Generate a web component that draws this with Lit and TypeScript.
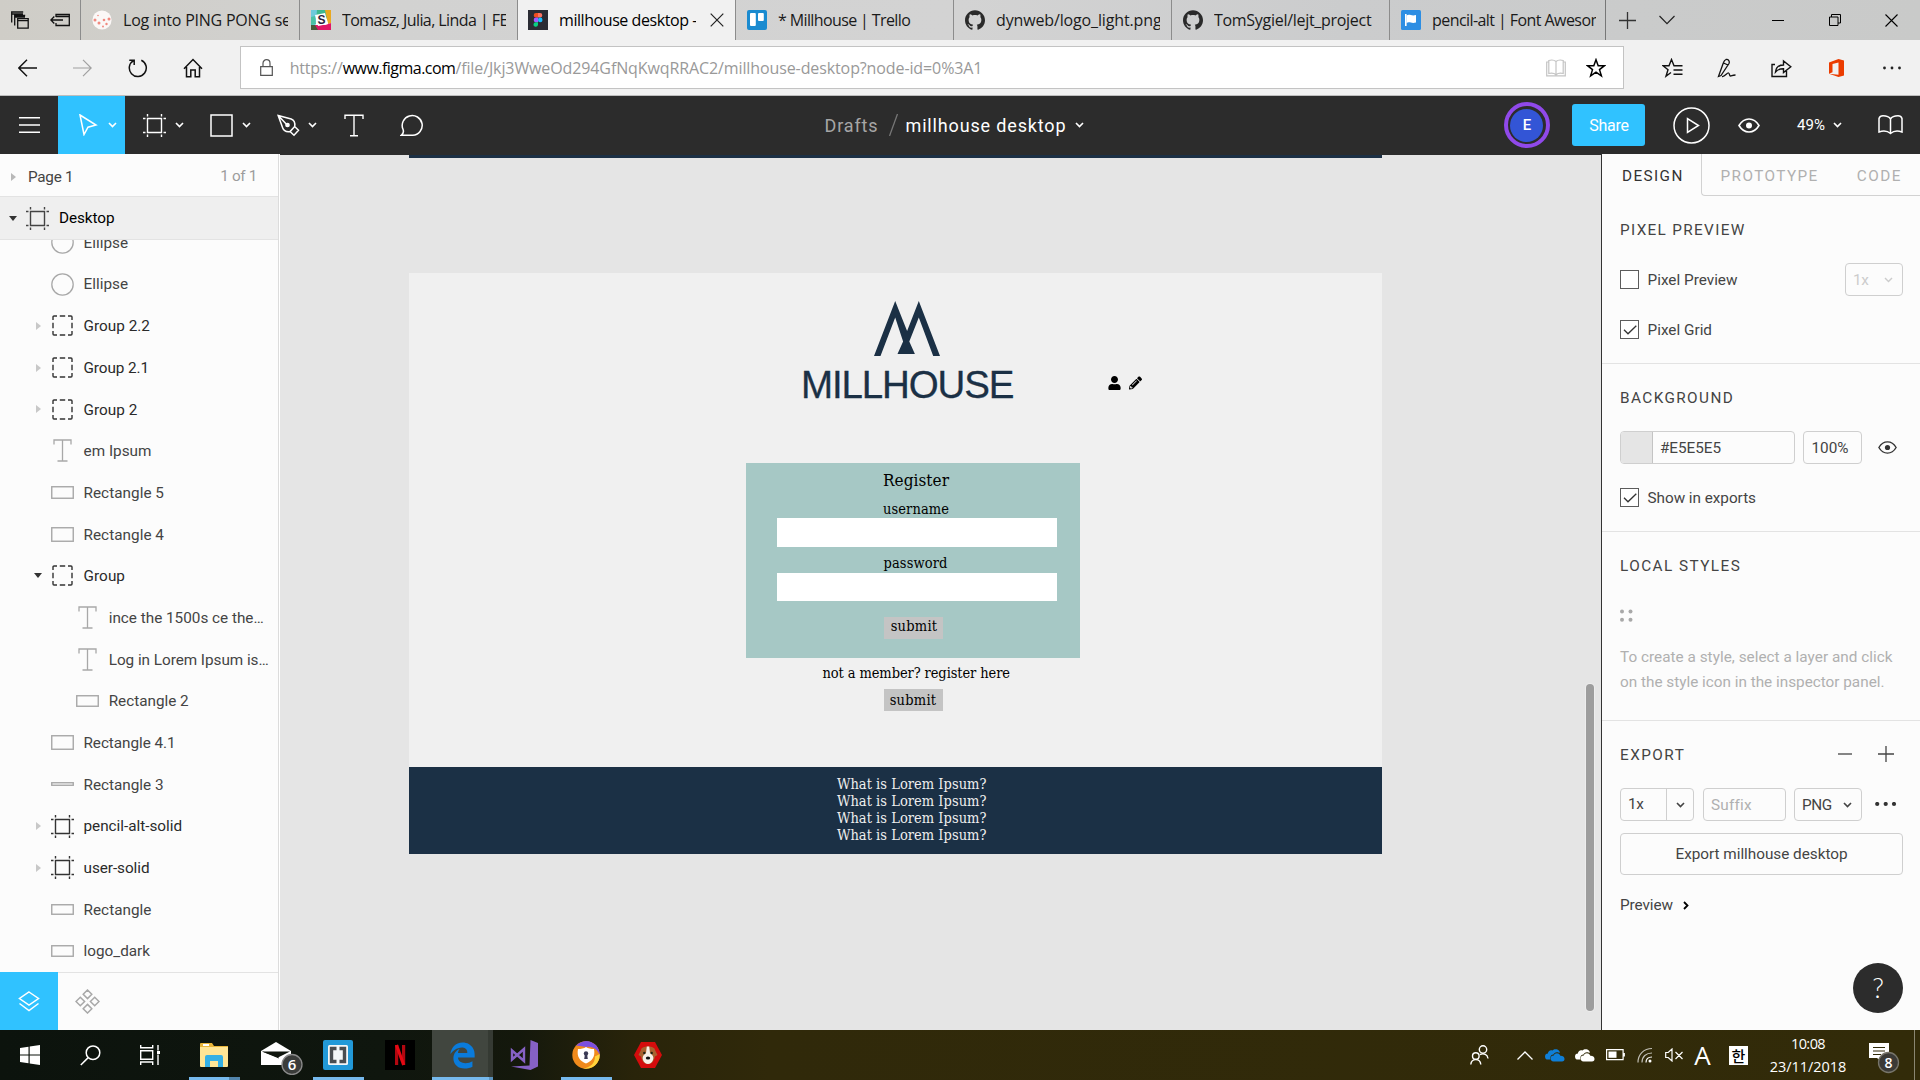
import { LitElement, html, svg, css, TemplateResult } from "lit";
import { customElement, property, query } from "lit/decorators.js";
import { classMap } from "lit/directives/class-map.js";

/** Single-line label whose tracking is adjusted to fill a given width. */
@customElement("fit-text")
class FitText extends LitElement {
  static styles = css`
    :host { display: inline-block; white-space: pre; flex: none; }
    .t { display: inline-block; }
  `;
  @property() text = "";
  @property({ type: Number }) w = 0;
  @query(".t") span!: HTMLElement;
  updated() {
    const s = this.span;
    s.style.letterSpacing = "0px";
    const natural = s.getBoundingClientRect().width;
    s.style.letterSpacing = `${(this.w - natural) / Math.max(1, this.text.length - 0.5)}px`;
  }
  render() {
    return html`<span class="t">${this.text}</span>`;
  }
}

const fit = (text: string, w: number) => html`<fit-text .text=${text} .w=${w}></fit-text>`;

/** Stroke icon on a w×h grid. */
const icon = (w: number, h: number, body: unknown, stroke = "currentColor", sw = 1.4) => html`<svg
  class="ic" width=${w} height=${h} viewBox="0 0 ${w} ${h}" fill="none" stroke=${stroke} stroke-width=${sw}>${body}</svg>`;

const chevron = (sw = 1.6) => icon(9, 6, svg`<path d="M1 1l3.500 3.600L8 1"/>`, "currentColor", sw);
const GH = "M12 .297c-6.63 0-12 5.373-12 12 0 5.303 3.438 9.8 8.205 11.385.6.113.82-.258.82-.577 0-.285-.01-1.04-.015-2.04-3.338.724-4.042-1.61-4.042-1.61C4.422 18.07 3.633 17.7 3.633 17.7c-1.087-.744.084-.729.084-.729 1.205.084 1.838 1.236 1.838 1.236 1.07 1.835 2.809 1.305 3.495.998.108-.776.417-1.305.76-1.605-2.665-.3-5.466-1.332-5.466-5.93 0-1.31.465-2.38 1.235-3.22-.135-.303-.54-1.523.105-3.176 0 0 1.005-.322 3.3 1.23.96-.267 1.98-.399 3-.405 1.02.006 2.04.138 3 .405 2.28-1.552 3.285-1.23 3.285-1.23.645 1.653.24 2.873.12 3.176.765.84 1.23 1.91 1.23 3.22 0 4.61-2.805 5.625-5.475 5.92.42.36.81 1.096.81 2.22 0 1.606-.015 2.896-.015 3.286 0 .315.21.69.825.57C20.565 22.092 24 17.592 24 12.297c0-6.627-5.373-12-12-12";
const USER = "M224 256c70.7 0 128-57.3 128-128S294.7 0 224 0 96 57.3 96 128s57.3 128 128 128zm89.6 32h-16.7c-22.2 10.2-46.9 16-72.9 16s-50.6-5.8-72.9-16h-16.7C60.2 288 0 348.2 0 422.4V464c0 26.5 21.5 48 48 48h352c26.5 0 48-21.5 48-48v-41.6c0-74.2-60.2-134.4-134.4-134.4z";
const PENCIL = "M497.9 142.1l-46.1 46.1c-4.7 4.7-12.3 4.7-17 0l-111-111c-4.7-4.7-4.7-12.3 0-17l46.1-46.1c18.7-18.7 49.1-18.7 67.9 0l60.1 60.1c18.8 18.7 18.8 49.1 0 67.9zM284.2 99.8L21.6 362.4.4 483.9c-2.9 16.4 11.4 30.6 27.8 27.8l121.5-21.3 262.6-262.6c4.7-4.7 4.7-12.3 0-17l-111-111c-4.8-4.7-12.4-4.7-17.1 0zM124.1 339.9c-5.5-5.5-5.5-14.3 0-19.8l154-154c5.5-5.5 14.3-5.5 19.8 0s5.5 14.3 0 19.8l-154 154c-5.5 5.5-14.3 5.5-19.8 0zM88 424h48v36.3l-64.5 11.3-31.1-31.1L51.7 376H88v48z";
const EDGE = "M25.714 228.163c.111-.162.204-.323.315-.485-.035.162-.069.323-.115.485h-.2zm460.572 15.508c0-44.032-7.754-84.465-28.801-122.405C416.498 47.879 343.912 8.001 258.893 8.001 118.962 7.724 40.617 113.214 26.214 227.678c42.429-61.312 117.073-121.376 220.375-124.966 0 0 109.666 0 99.419 104.957H169.997c6.369-37.386 18.554-58.986 34.339-78.926-75.048 34.894-121.85 96.096-120.742 188.315.83 71.448 50.124 144.836 120.743 171.976 83.357 31.847 192.776 7.2 240.132-21.324V363.307c-80.864 56.494-270.871 60.925-272.255-67.572h314.073v-52.064z";

/* ---------- Browser chrome ---------- */

const favicons: Record<string, TemplateResult> = {
  ping: icon(20, 20, svg`<circle cx="10" cy="10" r="9.600" fill="#fbf8f7"/><g fill="#f08a80"><circle cx="3" cy="10" r="1.500"/><circle cx="7" cy="13" r="1.500"/><circle cx="12" cy="10" r="1.300"/><circle cx="17" cy="9" r="1.500"/><circle cx="14.500" cy="14" r="1.200"/><circle cx="11" cy="16.500" r="1"/><circle cx="6" cy="5.500" r=".8"/></g>`, "none"),
  slack: icon(20, 20, svg`<rect width="20" height="20" fill="#fff"/><path d="M0 0h14l-4 6L0 7z" fill="#3eb890"/><path d="M0 0h6L4 20H0z" fill="#6ecadc"/><path d="M0 7l4-1 1 8-5 1z" fill="#4cc3a5"/><path d="M9 0l11 0v8l-6 1L8 4z" fill="#3eb890"/><path d="M14 0h6v13l-3 1z" fill="#e9a820"/><path d="M0 15l14 0 6-2v7H0z" fill="#e01765"/><path d="M0 15l4 0 3 5H0z" fill="#4a5a3a"/><path d="M4 5l10-2 3 11-10 2z" fill="#fff"/><text x="6.500" y="14" font-family="Liberation Sans" font-weight="bold" font-size="12" fill="#2b2440">S</text>`, "none"),
  figma: icon(20, 20, svg`<rect width="20" height="20" fill="#2b2c34"/><path d="M10 3H8a2.300 2.300 0 0 0 0 4.600h2z" fill="#f24e1e"/><path d="M10 3h2a2.300 2.300 0 0 1 0 4.600h-2z" fill="#ff7262"/><path d="M10 7.600H8a2.300 2.300 0 0 0 0 4.600h2z" fill="#a259ff"/><circle cx="12.200" cy="9.900" r="2.300" fill="#1abcfe"/><path d="M10 12.200H8A2.300 2.300 0 1 0 10 15z" fill="#0acf83"/>`, "none"),
  trello: icon(20, 20, svg`<rect width="20" height="20" rx="2" fill="#1a8bd0"/><rect x="3" y="3" width="5.800" height="13" rx="1" fill="#fff"/><rect x="11" y="3" width="5.800" height="8" rx="1" fill="#fff"/>`, "none"),
  github: html`<svg class="ic" width="20" height="20" viewBox="0 0 24 24" fill="#2a2a2a"><path d=${GH} /></svg>`,
  fa: icon(20, 20, svg`<rect width="20" height="20" rx="1.500" fill="#2d8ee3"/><path d="M4.800 4v12" stroke="#fff" stroke-width="1.600"/><path d="M5.500 5.500c3-1.800 5 1 9.500-.5v7.500c-4.500 1.500-6.500-1.300-9.500.5z" fill="#fff"/>`, "none"),
};

const tabs = [
  { fav: "ping", label: "Log into PING PONG se", w: 168 },
  { fav: "slack", label: "Tomasz, Julia, Linda | FE", w: 166 },
  { fav: "figma", label: "millhouse desktop –", w: 141, active: true },
  { fav: "trello", label: "* Millhouse | Trello", w: 132.5 },
  { fav: "github", label: "dynweb/logo_light.png", w: 165.5 },
  { fav: "github", label: "TomSygiel/lejt_project", w: 157.5 },
  { fav: "fa", label: "pencil-alt | Font Awesom", w: 173 },
];

@customElement("browser-chrome")
class BrowserChrome extends LitElement {
  static styles = css`
    :host { display: block; font-family: "Open Sans", "Noto Sans", sans-serif; color: #1a1a1a; }
    .ic { display: block; flex: none; }
    .tabs { display: flex; height: 40px; background: linear-gradient(90deg, #cfcdc7 0, #d2d2d1 20%, #d3d3d3 50%, #cbcccd 70%, #c9cac9 100%); }
    .lead { display: flex; flex: none; align-items: center; gap: 21px; box-sizing: border-box; width: 80px; padding-left: 11px; }
    .tab { display: flex; flex: none; align-items: center; box-sizing: border-box; width: 218px; height: 40px; padding: 0 11px 0 11px; border-left: 1px solid #8c8c8c; }
    .tab:nth-child(2) { width: 219px; }
    .tab:last-of-type { width: 216px; padding-right: 9px; }
    .tab.active { padding-left: 10px; background: #f1f1f1; }
    .label { flex: 1; min-width: 0; margin-left: 11px; overflow: hidden; white-space: nowrap; font-size: 16px; line-height: 40px; }
    .active .label { margin-right: 14px; color: #000; }
    .after { display: flex; flex: 1; align-items: center; border-left: 1px solid #777; padding-left: 13px; color: #222; }
    .after > .ic { margin-right: 23px; }
    .win { display: flex; margin-left: auto; color: #000; }
    .win span { display: grid; place-items: center; width: 57px; }
    .nav { display: flex; align-items: center; height: 55px; background: #f1f1f1; border-bottom: 1px solid #bdbdbd; }
    .slot { display: grid; place-items: center; width: 55.200px; height: 55px; }
    .address { display: flex; align-items: center; box-sizing: border-box; width: 1384px; height: 43px; margin-left: 19px; padding: 0 17px 0 19px; background: #fff; border: 1px solid #c3c3c3; }
    .url { display: flex; flex: 1; margin-left: 17px; font-size: 16px; color: #999; }
    .host { color: #000; }
    .address .star { margin-left: 20px; }
    .actions { display: flex; margin-left: 21px; }
    .actions .slot { width: 54.900px; }
  `;
  render() {
    return html`
      <div class="tabs">
        <span class="lead">
          ${icon(18, 18, svg`<path d="M.7 11.500V1h11.500M1 3h11M3.700 14.500V4.500h10.500M4 6h10"/><path d="M6.700 7.700h10.500v9.500H6.700zM6.700 9.700h10.500"/>`, "#111", 1.3)}
          ${icon(20, 18, svg`<path d="M6 6V3.500h13.300v11H6V12M6 5.500h13M.8 9H13M4.300 5.500L.8 9l3.500 3.500"/>`, "#111", 1.3)}
        </span>
        ${tabs.map((t) => html`<div class=${classMap({ tab: true, active: !!t.active })}>
          ${favicons[t.fav]}<span class="label">${fit(t.label, t.w)}</span>
          ${t.active ? icon(14, 14, svg`<path d="M.7.7l12.600 12.600M13.300.7L.7 13.300"/>`, "#222", 1.2) : ""}
        </div>`)}
        <section class="after">
          ${icon(17, 17, svg`<path d="M8.500 0v17M0 8.500h17"/>`, "#333", 1.3)}
          ${icon(16, 10, svg`<path d="M.5 1L8 8.600 15.500 1"/>`, "#222", 1.2)}
          <span class="win">
            <span>${icon(12, 12, svg`<path d="M0 6.500h12"/>`, "#000", 1)}</span>
            <span>${icon(12, 12, svg`<path d="M.5 3h8.500v8.500H.5zM2.500 3V.5h9V9H9"/>`, "#000", 1)}</span>
            <span>${icon(13, 13, svg`<path d="M.5.5l12 12M12.500.5l-12 12"/>`, "#000", 1.1)}</span>
          </span>
        </section>
      </div>
      <div class="nav">
        <div class="slot">${icon(19, 18, svg`<path d="M.8 9H19M9 .8L.8 9 9 17.200"/>`, "#111", 1.4)}</div>
        <div class="slot">${icon(19, 18, svg`<path d="M0 9h18.200M10 .8L18.200 9 10 17.200"/>`, "#a0a0a0", 1.2)}</div>
        <div class="slot">${icon(20, 20, svg`<path d="M13.300 2.200a8.500 8.500 0 1 1-7.800.4M1.300 2.200h4.900v4.900"/>`, "#111", 1.5)}</div>
        <div class="slot">${icon(20, 20, svg`<path d="M1 10.800L10 1.500l9 9.300M3.500 9v9.700h4.300V12h4.400v6.700h4.300V9"/>`, "#111", 1.5)}</div>
        <div class="address">
          ${icon(13, 17, svg`<path d="M.7 7.700h11.600v8.600H.7zM3 7.700V4.200a3.500 3.500 0 0 1 7 0v3.500"/>`, "#555", 1.2)}
          <span class="url">${fit("https://", 53)}<span class="host">${fit("www.figma.com", 113)}</span>${fit("/file/Jkj3WweOd294GfNqKwqRRAC2/millhouse-desktop?node-id=0%3A1", 527)}</span>
          ${icon(20, 18, svg`<path d="M10 2.500C8 .8 5 .8 2.800 1.500v13C5 14 8 14 10 15.800c2-1.800 5-1.800 7.200-1.300v-13C15 .8 12 .8 10 2.500zm0 0v13M2.800 3H.7v13.800h18.600V3h-2.100"/>`, "#c4c4c4", 1.2)}
          <span class="star">${icon(20, 20, svg`<path d="M10 1.700l2.200 6h6.300l-5 3.900 1.900 6.300L10 14.200l-5.400 3.700 1.900-6.300-5-3.900h6.300z"/>`, "#000", 1.5)}</span>
        </div>
        <div class="actions">
          <div class="slot">${icon(21, 20, svg`<path d="M13 7.700h-1L9.500 1.500 7 7.700H1l5 4-2 6.500 5-3.700M13 7.700h7.500M11.500 12h9M11.500 16.200h9"/>`, "#111", 1.4)}</div>
          <div class="slot">${icon(20, 20, svg`<path d="M2 17L1.500 18.500 4 17.500 12 5.500c1-2-.5-4.500-3-4C7.500 2 7 3 6.500 4.500L2 17zM5 18.500c3 .5 5-4 6.500-3.500s.5 3 2 3 1.500-1 5-1M6.500 5l4.500 2"/>`, "#111", 1.3)}</div>
          <div class="slot">${icon(21, 20, svg`<path d="M4 6.500H1v12h14.500V13M4.500 14c.5-4.500 3-7 8-7V3l7.300 5.800-7.300 5.700v-3.800c-4 0-6 .8-8 3.300z"/>`, "#111", 1.4)}</div>
          <div class="slot">${icon(17, 20, svg`<path d="M1 4.500L10.500 1 16 2.600v14.800L10.500 19 1 15.700l9.500 1V4.600L4.500 6v8.300L1 15.700z" fill="#eb3c00"/>`, "none")}</div>
          <div class="slot">${icon(20, 4, svg`<g fill="#222"><circle cx="2.500" cy="2" r="1.400"/><circle cx="10" cy="2" r="1.400"/><circle cx="17.500" cy="2" r="1.400"/></g>`, "none")}</div>
        </div>
      </div>`;
  }
}

/* ---------- Editor toolbar ---------- */

const frameIcon = (c: string) => icon(23, 23, svg`<path d="M4.500 4.500h14v14h-14z"/><path d="M4.500 0v2.500M18.500 0v2.500M4.500 20.500V23M18.500 20.500V23M0 4.500h2.500M0 18.500h2.500M20.500 4.500H23M20.500 18.500H23"/>`, c, 1.4);
const eye = (w: number, h: number, c: string) => html`<svg class="ic" width=${w} height=${h} viewBox="0 0 22 15" fill="none" stroke=${c} stroke-width="1.600"><path d="M1 7.500C3.500 3.300 6.800 1 11 1s7.500 2.300 10 6.500c-2.500 4.200-5.800 6.500-10 6.500S3.500 11.700 1 7.500z"/><circle cx="11" cy="7.500" r="3" fill=${c} stroke="none"/></svg>`;

@customElement("editor-toolbar")
class EditorToolbar extends LitElement {
  static styles = css`
    :host { display: flex; height: 58px; background: #2c2c2c; color: #fff; font-family: Roboto, sans-serif; font-size: 16px; }
    .ic { display: block; flex: none; }
    .side { display: flex; flex: 1 1 0; }
    .tool { display: flex; align-items: center; box-sizing: border-box; width: 66.800px; padding-left: 18px; gap: 8px; }
    .tool .pic { display: grid; place-items: center; width: 24px; }
    .tool.on { background: #30c2ff; }
    .tool.wide { width: 58px; padding-left: 17px; }
    .title { display: flex; align-items: center; font-size: 18px; margin-left: -6px; margin-right: 5px; }
    .drafts { color: #a6a6a6; margin-right: 10px; }
    .name { margin: 0 9px 0 8px; }
    .right { justify-content: flex-end; align-items: center; }
    .avatar { display: grid; place-items: center; box-sizing: border-box; width: 46px; height: 46px; border: 4px solid #9049ea; border-radius: 50%; margin-right: 22.500px; }
    .avatar b { display: grid; place-items: center; width: 33px; height: 33px; border-radius: 50%; background: #3355d6; font-size: 15px; font-weight: 500; }
    .share { display: grid; place-items: center; width: 73px; height: 42px; border-radius: 3px; background: #30c2ff; margin-right: 27.500px; }
    .play { margin-right: 28px; }
    .eye { margin-right: 37px; }
    .zoom { display: flex; align-items: center; gap: 8px; margin-right: 36px; font-size: 15px; }
    .book { margin-right: 17px; }
  `;
  tool(pic: TemplateResult, cls = "", menu = true) {
    return html`<div class="tool ${cls}"><span class="pic">${pic}</span>${menu ? chevron() : ""}</div>`;
  }
  render() {
    return html`
      <div class="side">
        ${this.tool(icon(21, 16, svg`<path d="M0 .8h21M0 8h21M0 15.200h21"/>`, "#fff", 1.4), "wide", false)}
        ${this.tool(icon(20, 22, svg`<path d="M2 1l16 10-8 2.200L6 20.500z"/>`, "#fff", 1.5), "on")}
        ${this.tool(frameIcon("#fff"))}
        ${this.tool(icon(23, 23, svg`<path d="M1 1h21v21H1z"/>`, "#fff", 1.5))}
        ${this.tool(icon(23, 23, svg`<path d="M1.200 1.500l13 3.500c3 1 4 4 3.500 7.500l-4.500 5c-3.500.5-6.500-.5-7.500-3.500zM1.200 1.500l8 8.500M13 17.500l4.700-5 3.800 3.800-4.500 5z"/><circle cx="10.500" cy="11" r="1.600" fill="#fff"/>`, "#fff", 1.5))}
        ${this.tool(icon(21, 23, svg`<path d="M1 5V1.200h18V5M10 1.200v20.500M6 21.800h8"/>`, "#fff", 1.4), "wide", false)}
        ${this.tool(icon(25, 24, svg`<path d="M1.200 22.300c2-1.500 2.800-3.500 1.800-6a10 9.900 0 1 1 9.800 6z"/>`, "#fff", 1.5), "wide", false)}
      </div>
      <div class="title">
        <span class="drafts">${fit("Drafts", 53.5)}</span>
        ${icon(9, 22, svg`<path d="M8.500 0L.5 22"/>`, "#777", 1.3)}
        <span class="name">${fit("millhouse desktop", 160.5)}</span>${chevron()}
      </div>
      <div class="side right">
        <span class="avatar"><b>E</b></span>
        <span class="share">${fit("Share", 39.5)}</span>
        <span class="play">${icon(37, 37, svg`<circle cx="18.500" cy="18.500" r="17.500"/><path d="M14.500 11.500v14l11-7z"/>`, "#fff", 1.5)}</span>
        <span class="eye">${eye(22, 15, "#fff")}</span>
        <span class="zoom">${fit("49%", 28)}${chevron()}</span>
        <span class="book">${icon(25, 20, svg`<path d="M12.500 4C11 1.500 8 .8 5 .8 3 .8 1.500 2 1 3.500V17c3-1 8-1.500 11.500 1.500C16 15.500 21 16 24 17V3.500C23.500 2 22 .8 20 .8c-3 0-6 .7-7.500 3.200zm0 0v14.500"/>`, "#fff", 1.5)}</span>
      </div>`;
  }
}

/* ---------- Layers panel ---------- */

type Layer = { kind: "ellipse" | "group" | "text" | "rect" | "frame"; name: string; w: number; h?: number; caret?: "r" | "d"; nested?: boolean };
const layers: Layer[] = [
  { kind: "ellipse", name: "Ellipse", w: 44.5 },
  { kind: "ellipse", name: "Ellipse", w: 44.5 },
  { kind: "group", name: "Group 2.2", w: 66.5, caret: "r" },
  { kind: "group", name: "Group 2.1", w: 65.5, caret: "r" },
  { kind: "group", name: "Group 2", w: 54, caret: "r" },
  { kind: "text", name: "em Ipsum", w: 68 },
  { kind: "rect", name: "Rectangle 5", w: 80.5, h: 12 },
  { kind: "rect", name: "Rectangle 4", w: 80.5, h: 14 },
  { kind: "group", name: "Group", w: 41.5, caret: "d" },
  { kind: "text", name: "ince the 1500s ce the…", w: 155, nested: true },
  { kind: "text", name: "Log in Lorem Ipsum is…", w: 160, nested: true },
  { kind: "rect", name: "Rectangle 2", w: 80, h: 11, nested: true },
  { kind: "rect", name: "Rectangle 4.1", w: 92, h: 14 },
  { kind: "rect", name: "Rectangle 3", w: 80, h: 3 },
  { kind: "frame", name: "pencil-alt-solid", w: 98.5, caret: "r" },
  { kind: "frame", name: "user-solid", w: 66, caret: "r" },
  { kind: "rect", name: "Rectangle", w: 68, h: 10 },
  { kind: "rect", name: "logo_dark", w: 66.5, h: 11 },
];

const caret = (dir?: "r" | "d", dark = false) =>
  dir === "d" ? icon(8, 5, svg`<path d="M0 0h8L4 5z" fill="#333"/>`, "none")
    : dir === "r" ? icon(5, 8, svg`<path d="M0 0l5 4-5 4z" fill=${dark ? "#b8b8b8" : "#c8c8c8"}/>`, "none") : "";

@customElement("layers-panel")
class LayersPanel extends LitElement {
  static styles = css`
    :host { display: flex; flex-direction: column; box-sizing: border-box; width: 279px; background: #fcfcfc; border-right: 1px solid #dcdcdc; font-family: Roboto, sans-serif; font-size: 15.300px; color: #444; }
    .ic { display: block; flex: none; }
    .page, .root { display: flex; align-items: center; box-sizing: border-box; border-bottom: 1px solid #e3e3e3; }
    .page { height: 43px; padding: 3px 21px 0 11px; gap: 12px; }
    .page .count { margin-left: auto; color: #9c9c9c; padding-bottom: 2px; }
    .root { height: 43px; padding-left: 9px; gap: 9px; background: #efefef; color: #000; }
    .root .nm { margin-left: 1px; }
    .list { display: flex; flex-direction: column; justify-content: flex-end; height: 732px; overflow: hidden; }
    .row { display: flex; align-items: center; flex: none; height: 41.700px; padding-left: 32.500px; }
    .row.nested { padding-left: 57.700px; }
    .row.strong { color: #2a2a2a; }
    .row fit-text { padding-top: .6px; }
    .caret { display: grid; place-items: center; width: 11px; }
    .pic { display: grid; place-items: center; width: 23px; margin: 0 9.500px 0 7.500px; }
    .modes { display: flex; box-sizing: border-box; height: 58px; border-top: 1px solid #e3e3e3; }
    .modes span { display: grid; place-items: center; width: 58px; height: 58px; margin-top: -1px; }
    .modes .on { background: #30c2ff; }
  `;
  pic(l: Layer) {
    const g = "#a8a8a8";
    if (l.kind === "ellipse") return icon(23, 23, svg`<circle cx="11.500" cy="11.500" r="10.700"/>`, g, 1.3);
    if (l.kind === "group") return icon(21, 21, svg`<path d="M1 5V2a1 1 0 0 1 1-1h3M16 1h3a1 1 0 0 1 1 1v3M20 16v3a1 1 0 0 1-1 1h-3M5 20H2a1 1 0 0 1-1-1v-3M7.800 1h5.400M7.800 20h5.400M1 7.800v5.400M20 7.800v5.400"/>`, "#333", 1.4);
    if (l.kind === "text") return icon(19, 23, svg`<path d="M1 5.500V1h17v4.500M9.500 1v21M4.500 22h10"/>`, g, 1.3);
    if (l.kind === "frame") return frameIcon("#333");
    const h = l.h!;
    return icon(23, h + 1, svg`<rect x=".75" y=".75" width="21.500" height=${h - 0.5}/>`, g, 1.4);
  }
  render() {
    return html`
      <div class="page">${caret("r", true)}${fit("Page 1", 45.5)}<span class="count">${fit("1 of 1", 37)}</span></div>
      <div class="root">${caret("d")}${frameIcon("#444")}<span class="nm">${fit("Desktop", 55.5)}</span></div>
      <div class="list">
        ${layers.map((l) => html`<div class=${classMap({ row: true, nested: !!l.nested, strong: l.kind === "frame" || l.kind === "group" })}>
          <span class="caret">${caret(l.caret)}</span><span class="pic">${this.pic(l)}</span>${fit(l.name, l.w)}
        </div>`)}
      </div>
      <div class="modes">
        <span class="on">${icon(22, 21, svg`<path d="M11 1l9.500 6.500L11 14 1.500 7.500zM1.500 12.500L11 19.500l9.500-7"/>`, "#fff", 1.5)}</span>
        <span>${icon(25, 25, svg`<path d="M12.500 1l4.300 4.300-4.300 4.300-4.300-4.300zM12.500 15.400l4.300 4.300-4.300 4.300-4.300-4.300zM5.300 8.200l4.300 4.300-4.300 4.300L1 12.500zM19.700 8.200l4.300 4.300-4.300 4.300-4.300-4.300z"/>`, "#a8a8a8", 1.5)}</span>
      </div>`;
  }
}

/* ---------- Canvas ---------- */

@customElement("design-canvas")
class DesignCanvas extends LitElement {
  static styles = css`
    :host { display: block; position: relative; flex: 1; overflow: hidden; background: #e5e5e5; border-top: 1px solid #2c2c2c; color: #000; font-family: "DejaVu Serif Condensed", "DejaVu Serif", serif; font-stretch: condensed; font-size: 14.500px; }
    .ic { display: block; }
    .above { position: absolute; left: 129px; top: 0; width: 973px; height: 3px; background: #1c3045; }
    .board { position: absolute; left: 129px; top: 118px; width: 973px; height: 581px; background: #f0f0f0; }
    .logo { position: absolute; left: 390px; top: 24px; }
    .tools { position: absolute; left: 699px; top: 103px; display: flex; gap: 8px; }
    .card { position: absolute; left: 337px; top: 190px; box-sizing: border-box; width: 334px; height: 195px; background: #a6c8c5; display: flex; flex-direction: column; padding-left: 31px; }
    .h { font-size: 17px; line-height: 20px; height: 20px; margin: 7px 0 0 106px; }
    .lab { line-height: 18px; height: 18px; margin: 10px 0 0 106px; }
    .lab.two { margin: 7px 0 1px 106.500px; }
    .in { width: 280px; height: 28.500px; background: #fff; flex: none; }
    .btn { display: grid; place-items: center; box-sizing: border-box; width: 59px; height: 22px; background: #c4c4c4; line-height: 18px; }
    .card .btn { margin: 15.500px 0 0 106.500px; padding: 0 0 3px 2px; }
    .ask { position: absolute; left: 413.500px; top: 391px; height: 18px; display: flex; line-height: 18px; }
    .board > .btn { position: absolute; left: 474.500px; top: 416px; }
    .foot { position: absolute; left: 0; bottom: 0; box-sizing: border-box; width: 973px; height: 87px; padding: 8.500px 0 0 428px; background: #1b3045; color: #efefef; display: flex; flex-direction: column; line-height: 17px; }
    .bar { position: absolute; left: 1306px; top: 529px; width: 8px; height: 327px; border-radius: 4px; background: #9d9d9d; box-shadow: 0 0 0 1px #ededed; }
  `;
  render() {
    return html`
      <div class="above"></div>
      <div class="board">
        <svg class="logo" width="220" height="108" viewBox="0 0 220 108" fill="#1b3045">
          <path d="M75 59L96.200 4l11.900 30L119.800 4l21.200 55h-6.800L119.800 20.500l-9.500 24 5.600 12.500H98.500l5.600-12.500L96.200 20.500 81.500 59z"/>
          <text x="2" y="100.500" font-family="Liberation Sans, Arial, sans-serif" font-size="38.500" textLength="213.500" stroke="#1b3045" stroke-width=".3">MILLHOUSE</text>
        </svg>
        <div class="tools">
          <svg class="ic" width="13" height="14" viewBox="0 0 448 512"><path d=${USER} /></svg>
          <svg class="ic" width="13" height="14" viewBox="0 0 512 512"><path d=${PENCIL} /></svg>
        </div>
        <div class="card">
          <div class="h">${fit("Register", 66)}</div>
          <div class="lab">${fit("username", 66)}</div>
          <div class="in"></div>
          <div class="lab two">${fit("password", 64)}</div>
          <div class="in"></div>
          <div class="btn">${fit("submit", 46.5)}</div>
        </div>
        <div class="ask">${fit("not a member? register here", 187.5)}</div>
        <div class="btn">${fit("submit", 46.5)}</div>
        <div class="foot">${[0, 1, 2, 3].map(() => fit("What is Lorem Ipsum?", 149.5))}</div>
      </div>
      <div class="bar"></div>`;
  }
}

/* ---------- Inspector ---------- */

@customElement("inspector-panel")
class InspectorPanel extends LitElement {
  static styles = css`
    :host { display: block; position: relative; box-sizing: border-box; width: 319px; background: #fcfcfc; border-left: 1px solid #333; font-family: Roboto, sans-serif; font-size: 15.300px; color: #444; }
    .ic { display: block; flex: none; }
    .tabs { display: flex; height: 42px; line-height: 44px; }
    .design { width: 79px; padding-left: 20px; color: #333; }
    .rest { flex: 1; display: flex; gap: 38px; box-sizing: border-box; height: 42px; padding-left: 18.500px; border: solid #d2d2d2; border-width: 0 0 1px 1px; border-bottom-left-radius: 4px; color: #b0b0b0; }
    section { padding: 0 17px 0 18px; border-bottom: 1px solid #e3e3e3; }
    section.last { border: 0; }
    .head { display: flex; align-items: center; height: 67px; }
    .row { display: flex; align-items: center; height: 33px; }
    .tall { height: 67px; }
    .chk { box-sizing: border-box; width: 19px; height: 19px; margin-right: 8.500px; border: 1.500px solid #5c5c5c; background: #fff; display: grid; place-items: center; }
    .box { display: flex; align-items: center; box-sizing: border-box; height: 33px; border: 1px solid #cfcfcf; border-radius: 4px; }
    .scale { width: 58px; margin-left: auto; padding: 0 9px 0 7px; justify-content: space-between; color: #ccc; }
    .color { width: 175px; margin-right: 8px; overflow: hidden; }
    .swatch { width: 31px; height: 31px; background: #e5e5e5; border-right: 1px solid #c4c4c4; margin-right: 7px; }
    .pct { width: 59px; padding-left: 7.500px; margin-right: 15.500px; }
    .hint { padding: 12.500px 0 25.500px; line-height: 25px; color: #b0b0b0; }
    .hint fit-text { display: block; }
    .minus { margin: -2px 26px 0 auto; }
    .plus { margin: -2px 9.500px 0 0; }
    .mult { width: 74px; margin-right: 9px; }
    .mult .v { width: 38px; padding-left: 7px; line-height: 31px; border-right: 1px solid #cfcfcf; }
    .mult .c { flex: 1; display: grid; place-items: center; }
    .suffix { width: 83px; padding-left: 7px; margin-right: 8px; color: #b0b0b0; }
    .png { width: 68px; padding: 0 9px 0 7px; justify-content: space-between; margin-right: 13px; }
    .export { height: 42px; margin-top: 12px; justify-content: center; }
    .preview { display: flex; align-items: center; gap: 10px; height: 34px; margin-top: 13px; }
    .help { position: absolute; right: 17px; bottom: 17px; width: 50px; height: 50px; border-radius: 50%; background: #2c2c2c; color: #fff; display: grid; place-items: center; font: 300 27px/50px Lato, sans-serif; }
  `;
  check(label: string, w: number, on: boolean) {
    return html`<span class="chk">${on ? icon(14, 10, svg`<path d="M1 4.800l4 4L13.300.7"/>`, "#333", 1.3) : ""}</span>${fit(label, w)}`;
  }
  render() {
    return html`
      <div class="tabs"><div class="design">${fit("DESIGN", 61)}</div><div class="rest">${fit("PROTOTYPE", 97.5)}${fit("CODE", 44.5)}</div></div>
      <section>
        <div class="head">${fit("PIXEL PREVIEW", 125)}</div>
        <div class="row">${this.check("Pixel Preview", 90, false)}<span class="box scale">${fit("1x", 15.5)}${chevron(1.4)}</span></div>
        <div class="row tall">${this.check("Pixel Grid", 64.5, true)}</div>
      </section>
      <section>
        <div class="head">${fit("BACKGROUND", 113.5)}</div>
        <div class="row"><span class="box color"><span class="swatch"></span>${fit("#E5E5E5", 61)}</span><span class="box pct">${fit("100%", 37)}</span>${eye(19, 13, "#333")}</div>
        <div class="row tall">${this.check("Show in exports", 108.5, true)}</div>
      </section>
      <section>
        <div class="head">${fit("LOCAL STYLES", 120.5)}</div>
        <div class="row">${icon(13, 13, svg`<g fill="#a8a8a8"><circle cx="2" cy="2.500" r="2"/><circle cx="10.500" cy="2.500" r="2"/><circle cx="2" cy="10.800" r="2"/><circle cx="10.500" cy="10.800" r="2"/></g>`, "none")}</div>
        <div class="hint">${fit("To create a style, select a layer and click", 272.5)}${fit("on the style icon in the inspector panel.", 264.5)}</div>
      </section>
      <section class="last">
        <div class="head">${fit("EXPORT", 64.5)}
          <span class="minus">${icon(14, 16, svg`<path d="M0 8h14"/>`, "#444", 1.3)}</span>
          <span class="plus">${icon(16, 16, svg`<path d="M0 8h16M8 0v16"/>`, "#444", 1.3)}</span>
        </div>
        <div class="row">
          <span class="box mult"><span class="v">${fit("1x", 15.5)}</span><span class="c">${chevron()}</span></span>
          <span class="box suffix">${fit("Suffix", 39.5)}</span>
          <span class="box png">${fit("PNG", 30)}${chevron()}</span>
          ${icon(22, 5, svg`<g fill="#333"><circle cx="2.200" cy="2" r="2.100"/><circle cx="10.700" cy="2" r="2.100"/><circle cx="19" cy="2" r="2.100"/></g>`, "none")}
        </div>
        <div class="box export">${fit("Export millhouse desktop", 172)}</div>
        <div class="preview">${fit("Preview", 53)}${icon(6, 9, svg`<path d="M1 1l3.500 3.500L1 8"/>`, "#000", 1.8)}</div>
      </section>
      <div class="help">?</div>`;
  }
}

/* ---------- Taskbar ---------- */

const apps: { pic: TemplateResult; cls?: string }[] = [
  { cls: "run more", pic: icon(28, 24, svg`<path d="M0 1a1 1 0 0 1 1-1h11l2 3h14v20H0z" fill="#e8b53a"/><path d="M0 4h28v19a1 1 0 0 1-1 1H1a1 1 0 0 1-1-1z" fill="#ffe595"/><rect x="3" y="1" width="6" height="2" fill="#fff"/><path d="M5 14a2 2 0 0 1 2-2h14a2 2 0 0 1 2 2v10h-5v-6h-8v6H5z" fill="#35b0e5"/>`, "none") },
  { pic: html`<svg class="ic mail" width="42" height="34" viewBox="0 0 42 34"><path d="M0 10L15 1l15 9v14H0z" fill="#fff"/><path d="M1 10.500h28l-12 6z" fill="#10160e"/><path d="M1 10.500l17 7-2-4z" fill="#10160e"/><circle cx="31" cy="23.500" r="10" fill="#3a3c3a" stroke="#8a8a8a" stroke-width="1.300"/><text x="31" y="29" text-anchor="middle" font-family="Open Sans" font-size="15" font-weight="600" fill="#fff">6</text></svg>` },
  { cls: "run", pic: icon(30, 30, svg`<rect width="30" height="30" rx="2" fill="#2299d8"/><rect x="5" y="5" width="20" height="20" rx="1.500" fill="#f4f6f7"/><path d="M13.500 8.500H8.500v13h5M16.500 8.500h5v13h-5" stroke="#4a4d50" stroke-width="3.400"/>`, "none") },
  { pic: icon(30, 30, svg`<rect width="30" height="30" fill="#000"/><rect x="10" y="5" width="3.200" height="20" fill="#b20710"/><rect x="17" y="5" width="3.200" height="20" fill="#b20710"/><line x1="11.500" y1="5" x2="18.700" y2="25" stroke="#e50914" stroke-width="3.200"/>`, "none") },
  { cls: "current", pic: html`<svg class="ic" width="27" height="27" viewBox="0 0 512 512" fill="#0a7bdb"><path d=${EDGE} /></svg>` },
  { pic: icon(30, 30, svg`<path d="M21.500 0l7.500 3v23.500l-7.500 3.500L2 26.500l18.500-1z" fill="#8661c5"/><path d="M3 11.500v8l13 3.500V8.500z" fill="none"/><path d="M3 10.500l12 10.500V9L3 19.500z" stroke="#8661c5" stroke-width="2.400"/>`, "none") },
  { cls: "run", pic: icon(28, 28, svg`<circle cx="14" cy="14" r="13.700" fill="#f08a1c"/><path d="M4 4.500A13.700 13.700 0 0 1 27.700 15c-1-6-7-10-13-9z" fill="#7b4fe0"/><path d="M27.700 13A13.700 13.700 0 0 1 11 27.400c8-1 12-6 12-12z" fill="#ffd43c"/><path d="M6 8c3 0 6-.5 8-2 2 1.500 5 2 8 2 1.500 8-2 12-8 14.500C8 20 4.500 16 6 8z" fill="#fff"/><circle cx="14" cy="12.500" r="2.200" fill="#3a3a55"/><path d="M13 13h2l.8 5h-3.600z" fill="#3a3a55"/>`, "none") },
  { pic: icon(28, 26, svg`<path d="M7 0h14l7 13-7 13H7L0 13z" fill="#d40c0c"/><path d="M7 8c0-2 3-3.500 7-3.500S21 6 21 8l2.500 5-2.500 1.500c-1 5-3.500 7.500-7 7.500s-6-2.500-7-7.500L4.500 13z" fill="#a8622f"/><path d="M12.800 4.500h2.400L16 11c3 2 4 4 3 7-1 2.500-3 4-5 4s-4-1.500-5-4c-1-3 0-5 3-7z" fill="#f7efe6"/><circle cx="10.300" cy="11" r="1.200" fill="#221"/><circle cx="17.700" cy="11" r="1.200" fill="#221"/><ellipse cx="14" cy="16" rx="2.200" ry="1.600" fill="#111"/>`, "none") },
];

const cloud = (c: string) => icon(20, 14, svg`<path d="M5.500 11.500H3.200a3 3 0 0 1-.3-6C3 3 5.500 1.500 7.500 2.500A4.500 4.500 0 0 1 15 4.500l-1 .2C11 3.500 9 5 8.500 6.500 6 6.500 4.800 9 5.500 11.500z" fill=${c}/><path d="M8.500 13.500a3 3 0 0 1 .3-6c.7-3 5.500-3.200 6.500.2 2-.2 4.200.8 4.200 3a2.700 2.700 0 0 1-2.500 2.800z" fill=${c}/>`, "none");

@customElement("task-bar")
class TaskBar extends LitElement {
  static styles = css`
    :host { display: flex; height: 50px; background: linear-gradient(90deg, #0c130d 0, #0f160e 20%, #14180c 27%, #29240a 33%, #30290a 40%, #322b09 100%); color: #fff; font-family: "Open Sans", "Noto Sans", sans-serif; font-size: 14.500px; }
    .ic { display: block; flex: none; }
    .sys, .app { display: grid; place-items: center; height: 50px; width: 60px; }
    .apps { display: flex; margin-left: 3px; }
    .app { box-sizing: border-box; width: 62px; }
    .app.run { background: linear-gradient(#76b9ed, #76b9ed) 6px 100% / 51px 3px no-repeat; }
    .app.run.more { background: linear-gradient(90deg, #76b9ed 40px, #5285ac 40px) 6px 100% / 51px 3px no-repeat; }
    .app.current { background: linear-gradient(90deg, #76b9ed 57px, #5a93bf 57px) 1px 100% / 61px 3px no-repeat, linear-gradient(90deg, transparent 1px, #41463f 1px, #41463f 57px, #353a33 57px); }
    .mail { margin: 5px 0 0 12px; }
    .people { display: grid; place-items: center; margin-left: auto; width: 36px; }
    .tray { display: grid; grid-template-columns: 30px 30px 30px 31px 29px 28px 30px 42px; align-items: center; justify-items: center; box-sizing: border-box; width: 269px; padding-left: 12.500px; }
    .caps { font-size: 26px; line-height: 30px; }
    .ko { display: grid; place-items: center; width: 19px; height: 19px; background: #fff; color: #000; font: 500 15px/19px "Noto Sans CJK KR", sans-serif; }
    .clock { display: flex; flex-direction: column; align-items: center; justify-content: center; width: 84px; line-height: 23px; }
    .note { display: grid; place-items: center; width: 64px; padding: 5px 2px 0 8px; box-sizing: border-box; }
    .peek { width: 5px; border-left: 1px solid #8a8672; }
  `;
  render() {
    return html`
      <div class="sys">${icon(20, 20, svg`<path d="M0 3l8.500-1.200v7.700H0zM9.700 1.600L20 0v9.500H9.700zM0 10.500h8.500v7.700L0 17zM9.700 10.500H20V20L9.700 18.400z" fill="#fff"/>`, "none")}</div>
      <div class="sys">${icon(21, 21, svg`<circle cx="13" cy="7.700" r="6.800"/><path d="M8.200 12.600L.8 20"/>`, "#fff", 1.5)}</div>
      <div class="sys">${icon(21, 20, svg`<path d="M.7 0v2.800h12V0M.7 5.800h12v8.500H.7zM.7 20v-3h12v3M18 0v5.500M18 9.500V20"/><rect x="17" y="6" width="3" height="3" fill="#fff" stroke="none"/>`, "#fff", 1.4)}</div>
      <div class="apps">${apps.map((a) => html`<div class="app ${a.cls ?? ""}">${a.pic}</div>`)}</div>
      <div class="people">${icon(19, 20, svg`<circle cx="13" cy="4.500" r="3.700"/><path d="M10 9.500c4-1.500 7.500 0 8 4"/><circle cx="5.800" cy="11" r="3.300"/><path d="M.8 19.500c.5-6.500 9.500-6.500 10 0"/>`, "#fff", 1.4)}</div>
      <div class="tray">
        ${icon(16, 9, svg`<path d="M.5 8.500L8 1l7.500 7.500"/>`, "#fff", 1.3)}
        ${cloud("#0f7fd8")}${cloud("#fff")}
        ${icon(19, 12, svg`<path d="M.6.6h16.500v10H.6zM18.300 4v3.500"/><rect x="2.500" y="2.500" width="8" height="6.300" fill="#fff" stroke="none"/>`, "#fff", 1.2)}
        ${icon(16, 16, svg`<circle cx="13" cy="14" r="1.500" fill="#fff" stroke="none"/><path d="M9 15.500C9 12 11 10 15 10"/><path d="M5 15.500C5 9.500 9 6 15 6M1 15.500C1 7 7 1.500 15 1.500" opacity=".7"/>`, "#fff", 1.2)}
        ${icon(18, 14, svg`<path d="M.7 4.500h2.500L7 1v12L3.200 9.500H.7zM10.500 4l7 7M17.500 4l-7 7"/>`, "#fff", 1.2)}
        <span class="caps">A</span>
        <span class="ko">한</span>
      </div>
      <div class="clock">${fit("10:08", 34.5)}${fit("23/11/2018", 76.5)}</div>
      <div class="note"><svg class="ic" width="32" height="34" viewBox="0 0 32 34"><path d="M0 2h20v15h-6v5l-6-5H0z" fill="#fff"/><path d="M4 6.500h12M4 10h12M4 13.500h8" stroke="#322b09" stroke-width="1.200"/><circle cx="19.500" cy="21.500" r="10" fill="#3b3a36" stroke="#77756a" stroke-width="1.300"/><text x="19.500" y="26.500" text-anchor="middle" font-family="Open Sans" font-size="14" font-weight="600" fill="#fff">8</text></svg></div>
      <div class="peek"></div>`;
  }
}

@customElement("app-root")
class AppRoot extends LitElement {
  static styles = css`
    :host { display: flex; flex-direction: column; width: 1920px; height: 1080px; overflow: hidden; background: #fff; }
    .work { display: flex; height: 876px; }
    .work design-canvas { margin-left: 1px; }
  `;
  render() {
    return html`
      <browser-chrome></browser-chrome>
      <editor-toolbar></editor-toolbar>
      <div class="work"><layers-panel></layers-panel><design-canvas></design-canvas><inspector-panel></inspector-panel></div>
      <task-bar></task-bar>`;
  }
}
